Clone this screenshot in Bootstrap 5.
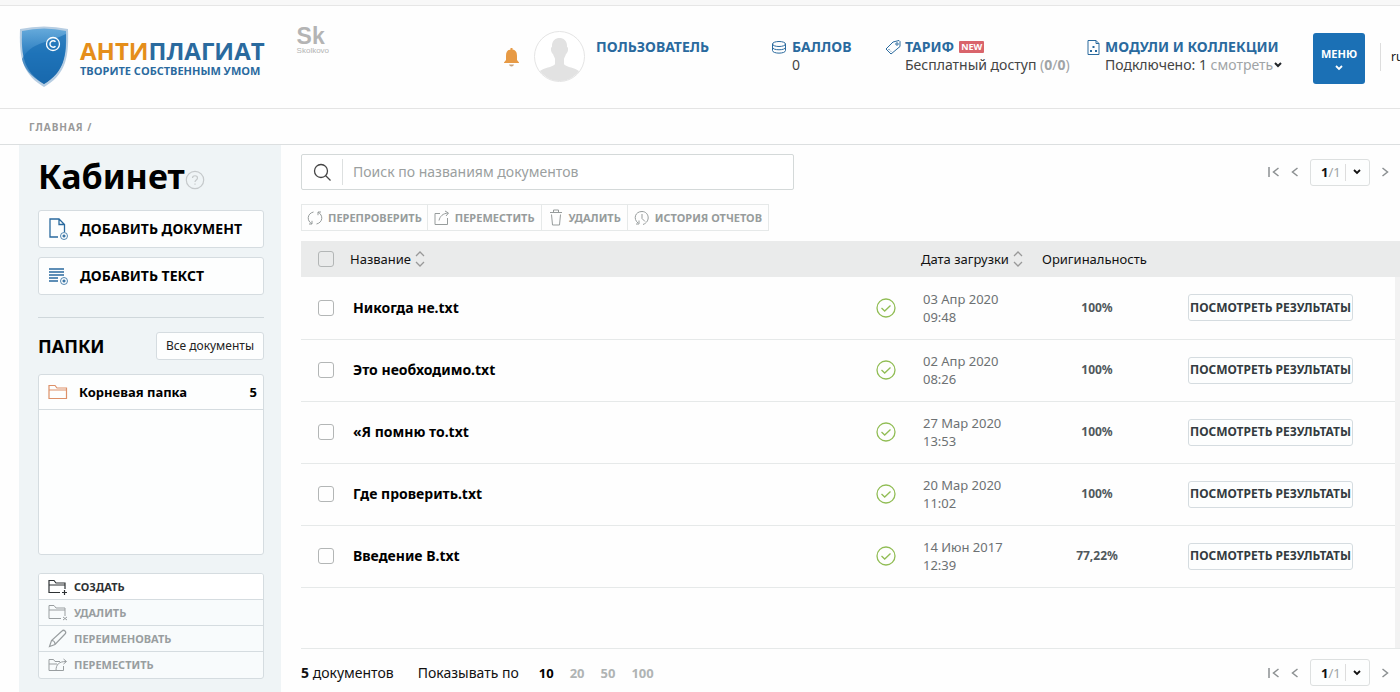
<!DOCTYPE html>
<html lang="ru">
<head>
<meta charset="utf-8">
<meta name="viewport" content="width=device-width, initial-scale=1">
<title>Антиплагиат — Кабинет</title>
<link href="https://cdn.jsdelivr.net/npm/bootstrap@5.3.0/dist/css/bootstrap.min.css" rel="stylesheet">
<style>
:root { --brand: #2a6a9e; --muted: #a0a4a6; --line: #e2e5e5; }
body { font-family: "Noto Sans", "Open Sans", sans-serif; font-size: 14px; line-height: 18px; color: #111; background: #fefefe; overflow-x: hidden; }
a { color: inherit; text-decoration: none; }
button { font-family: inherit; }
svg { flex: none; fill: none; stroke: currentColor; display: block; }
svg.solid { stroke: none; }

.top-strip { height: 6px; background: #f8f8f8; border-bottom: 1px solid #e6e6e6; }
.site-header { height: 103px; padding-left: 19px; border-bottom: 1px solid #e4e4e4; overflow: hidden; }
.site-header > * { flex: none; }
.logo { margin-top: 20px; gap: 11px; color: var(--brand); font-weight: 700; font-family: "Open Sans", "Noto Sans", sans-serif; }
.logo-name { font-size: 24px; line-height: 26px; margin-top: 12px; }
.logo-name span { color: #e58e1a; }
.logo-sub { font-size: 11px; line-height: 14px; }
.sk { color: #b4b4b4; margin: 20px 0 0 32px; font-family: "Liberation Sans", sans-serif; }
.sk b { display: block; font-size: 23px; line-height: 20px; }
.sk small { display: block; font-size: 8px; line-height: 10px; }
.bell { margin-top: 42px; }
.avatar { margin: 25px 11px 0 15px; }
.info { margin-top: 32px; gap: 4px; color: #444; }
.info > svg { color: var(--brand); margin-top: 1px; }
.info-title { color: var(--brand); font-weight: 700; gap: 5px; }
.info-user { width: 175px; }
.info-points { width: 114px; }
.info-plan { width: 201px; }
.info-modules { width: 227px; }
.new-tag { font-size: 9px; line-height: 12px; padding: 0 2px; background: #d9646b; color: #fff; border-radius: 1px; }
.pale { color: var(--muted); }
.menu-btn { width: 52px; height: 51px; margin-top: 27px; padding: 0; background: #1b70b5; color: #fff; border: 0; border-radius: 3px; font-size: 11px; font-weight: 700; line-height: 14px; }
.lang { margin: 37px 0 0 15px; padding: 5px 0 5px 10px; border-left: 1px solid #ddd; font-size: 12px; width: 20px; white-space: nowrap; }

.crumbs { height: 36px; padding-left: 29px; border-bottom: 1px solid #dcdfe0; font-size: 10px; font-weight: 700; color: #999; letter-spacing: 1px; }

.layout { min-height: calc(100vh - 145px); }
.sidebar { flex: none; width: 262px; margin-left: 19px; padding: 10px 17px 14px 19px; background: #eff4f6; }
.sidebar h1 { font-size: 34px; line-height: 42px; font-weight: 700; margin: 0; color: #000; }
.help { color: #c5c9cb; margin-top: 7px; }
.box { background: #fdfefe; border: 1px solid #d5dce0; border-radius: 3px; }
.add-list { gap: 9px; margin-top: 13px; }
.add-btn { height: 38px; padding: 0 9px; gap: 11px; font-weight: 700; color: #000; }
.add-btn svg { color: var(--brand); }
.sep { border-top: 1px solid #cfd7db; margin: 22px 0 14px; }
.folders-title { font-size: 18px; line-height: 28px; font-weight: 700; margin: 0; color: #000; }
.all-btn { height: 28px; padding: 0 9px; font-size: 12px; color: #222; }
.folders { height: 181px; margin-top: 14px; }
.folder { height: 35px; padding: 0 6px 0 9px; gap: 11px; font-size: 13px; font-weight: 700; border-bottom: 1px solid #d5dce0; color: #000; }
.folder svg { color: #dd9068; }
.acts { margin-top: 18px; background: #f8fbfc; overflow: hidden; }
.acts button { height: 26px; padding: 0 9px; gap: 6px; border: 0; border-bottom: 1px solid #d5dce0; background: none; font-size: 11px; font-weight: 700; color: #999ea0; text-align: left; }
.acts button:first-child { background: #fff; color: #2e3234; }
.acts button:last-child { border-bottom: 0; }

.content { min-width: 0; padding: 9px 0 0 20px; }
.search { width: 493px; height: 36px; border: 1px solid #d4d9d9; border-radius: 2px; background: #fff; }
.search label { width: 41px; height: 26px; border-right: 1px solid #dde0e0; color: #444; padding-left: 11px; }
.search input { border: 0; outline: 0; padding: 0 10px; background: none; min-width: 0; font-size: 14px; }
.search input::placeholder { color: #9b9f9f; opacity: 1; }
.pager { gap: 11px; color: #8c9092; padding-right: 11px; }
.pager .icon-btn { border: 0; background: none; padding: 0; color: inherit; }
.pager-box { width: 60px; height: 27px; padding: 0 0 0 10px; font-size: 13px; border-color: #dde0e0; color: #111; }
.pager-box i { border-left: 1px solid #ddd; height: 17px; margin: 0 6px 0 4px; }
.tools { margin-top: 14px; height: 27px; }
.tools button { height: 27px; padding: 0 5px; gap: 5px; background: none; border: 1px solid #e6e9e9; border-left-width: 0; font-size: 11px; font-weight: 700; color: #979c9c; white-space: nowrap; }
.tools button:first-child { border-left-width: 1px; }
.tools button:not(:first-child) { padding: 0 6px; }

.docs-area { margin-top: 10px; height: 408px; border-bottom: 1px solid #e6e9e9; background: linear-gradient(#f2f2f2, #f2f2f2) right / 5px 100% no-repeat; }
.docs { --bs-table-bg: transparent; table-layout: fixed; margin: 0; }
.docs > thead > tr > th { height: 36px; padding: 0; background: #eaebeb; font-size: 13px; font-weight: 400; border: 0; vertical-align: middle; color: #111; }
.docs > tbody > tr > td { height: 62px; padding: 0; border-bottom: 1px solid #e6e9e9; vertical-align: middle; }
.docs > tbody > tr > td:last-child { border: 0; }
.docs > :not(caption) > * > :first-child { padding-left: 17px; }
.c-check { width: 49px; } .c-state { width: 71px; } .c-date { width: 121px; } .c-orig { width: 110px; } .c-act { width: 243px; } .c-end { width: 5px; }
.docs .form-check-input { display: block; width: 16px; height: 16px; margin: 0; border: 1px solid #b3b6b6; border-radius: 3px; background-color: transparent; }
.docs .doc-name { font-weight: 700; padding-left: 3px; color: #000; }
.docs .doc-state { color: #91bd55; }
.docs .doc-date { padding-left: 2px; font-size: 13px; color: #6d7173; }
.docs .doc-orig { font-size: 12px; font-weight: 700; text-align: center; color: #50585c; }
.docs .doc-act { padding-left: 36px; }
.result-btn { width: 165px; height: 27px; padding: 0; font-size: 12px; line-height: 16px; font-weight: 700; color: #333b40; white-space: nowrap; }
.sort { color: #999; }
.foot { padding-top: 10px; }
.foot-sizes { gap: 16px; margin-left: 20px; font-size: 13px; font-weight: 700; color: #b0b4b4; }
</style>
</head>
<body>
<div class="top-strip"></div>
<header class="site-header d-flex align-items-start">
  <a href="#" class="logo d-flex">
    <svg class="solid" width="50" height="62" viewBox="0 0 50 62">
      <defs><linearGradient id="sh" x1="0" y1="0" x2="0" y2="1"><stop offset="0" stop-color="#66aadb"/><stop offset=".45" stop-color="#2d7fc1"/><stop offset="1" stop-color="#1a5f9f"/></linearGradient></defs>
      <path d="M1 3Q25-2 49 3C50 31 47 48 25 61C3 48 0 31 1 3Z" fill="#b6cde2"/>
      <path d="M3 5Q25 0 47 5C48 30 45 46 25 58C5 46 2 30 3 5Z" fill="url(#sh)"/>
      <path d="M3 33C12 16 29 17 47 8C47 30 45 46 25 58C11 50 5 42 3 33Z" fill="#176db4" opacity=".65"/>
      <circle cx="34" cy="18" r="6.500" fill="none" stroke="#fff" stroke-width="1.300"/>
      <path d="M36.500 15.800A3.200 3.200 0 1 0 36.500 20.200" fill="none" stroke="#fff" stroke-width="1.400"/>
    </svg>
    <div><div class="logo-name"><span>АНТИ</span>ПЛАГИАТ</div><div class="logo-sub">ТВОРИТЕ СОБСТВЕННЫМ УМОМ</div></div>
  </a>
  <div class="sk"><b>Sk</b><small>Skolkovo</small></div>
  <a href="#" class="bell ms-auto" aria-label="Уведомления">
    <svg class="solid" width="15" height="19" viewBox="0 0 15 19"><path fill="#e79a45" d="M6.500 0h2v1.500C12 2.200 13 4.500 13 8v4l2 2.500v.5H0v-.5L2 12V8C2 4.500 3 2.200 6.500 1.500Z"/><path fill="#c9a37d" d="M5 16.500h5q-.5 2-2.500 2T5 16.500Z"/></svg>
  </a>
  <svg class="avatar solid" width="51" height="51" viewBox="0 0 51 51"><defs><clipPath id="av"><circle cx="25.500" cy="25.500" r="24.500"/></clipPath></defs><circle cx="25.500" cy="25.500" r="25" fill="#fff" stroke="#e4e4e4"/><path clip-path="url(#av)" fill="#e2e2e2" d="M18 16c-1-12 16-12 15 0 2 0 1 6-1 7-1 3-2 4-2 5v5c2 4 15 3 18 11v8H3v-8c3-8 16-7 18-11v-5c0-1-1-2-2-5-2-1-3-7-1-7Z"/></svg>
  <div class="info info-user"><a href="#" class="info-title">ПОЛЬЗОВАТЕЛЬ</a></div>
  <div class="info info-points d-flex">
    <svg width="17" height="17" viewBox="0 0 17 17"><ellipse cx="8" cy="5" rx="6.500" ry="2.500"/><path d="M1.500 5v6.500c0 3.500 13 3.500 13 0V5M1.500 8.300c0 3.300 13 3.300 13 0"/></svg>
    <div><a href="#" class="info-title">БАЛЛОВ</a><div>0</div></div>
  </div>
  <div class="info info-plan d-flex">
    <svg width="16" height="17" viewBox="0 0 16 17"><path d="M8 3 14 1.500 15 2.500V7.500L6 15 1 10Z"/><circle cx="12" cy="5" r="1.200"/><path d="M3.500 10l2.500 2.500" stroke-dasharray="1.500 1"/></svg>
    <div><a href="#" class="info-title d-flex align-items-center">ТАРИФ <span class="new-tag">NEW</span></a><div class="text-nowrap">Бесплатный доступ <span class="pale">(<b>0</b>/<b>0</b>)</span></div></div>
  </div>
  <div class="info info-modules d-flex">
    <svg width="15" height="17" viewBox="0 0 15 17"><path d="M2 1.500h8l3 3v11H2ZM10 1.500v3h3"/><path d="M6.500 7h2v2h-2zM4 11h2v2H4zM9 11h2v2H9z" fill="currentColor" stroke="none"/></svg>
    <div><a href="#" class="info-title">МОДУЛИ И КОЛЛЕКЦИИ</a><a href="#" class="d-flex align-items-center text-nowrap">Подключено: 1&nbsp;<span class="pale">смотреть</span><svg class="text-dark" width="10" height="8" viewBox="0 0 10 8" stroke-width="2"><path d="M2 2l3 3 3-3"/></svg></a></div>
  </div>
  <button class="menu-btn d-flex flex-column align-items-center justify-content-center" type="button">МЕНЮ<svg class="mt-1" width="8" height="6" viewBox="0 0 8 6" stroke-width="1.800"><path d="M1 1l3 3 3-3"/></svg></button>
  <a href="#" class="lang">ru</a>
</header>
<nav class="crumbs d-flex align-items-center" aria-label="Навигация"><a href="#">ГЛАВНАЯ</a>&nbsp;/</nav>

<div class="layout d-flex">
  <aside class="sidebar">
    <div class="d-flex align-items-center"><h1>Кабинет</h1>
      <svg class="help" width="20" height="20" viewBox="0 0 20 20" stroke-width="1.200"><circle cx="10" cy="10" r="8.700"/><path d="M7.500 8c0-3 5-3 5 0 0 2-2.500 2-2.500 4M10 13.500v1.300"/></svg>
    </div>
    <div class="add-list d-flex flex-column">
      <button type="button" class="box add-btn d-flex align-items-center"><svg width="21" height="22" viewBox="0 0 21 22" stroke-width="1.300"><path d="M10 19H2V1h9l5.500 5.500V14M11 1v5.500h5.500"/><circle cx="16" cy="18" r="3.500" stroke-width=".8"/><path d="M14.500 18h3M16 16.500v3"/></svg>ДОБАВИТЬ ДОКУМЕНТ</button>
      <button type="button" class="box add-btn d-flex align-items-center"><svg width="21" height="18" viewBox="0 0 21 18" stroke-width="1.600"><path d="M1 2h15M1 5h15M1 8h15M1 11h9M1 14h9"/><circle cx="16" cy="14" r="3.500" stroke-width=".8"/><path stroke-width="1.300" d="M14.500 14h3M16 12.500v3"/></svg>ДОБАВИТЬ ТЕКСТ</button>
    </div>
    <div class="sep"></div>
    <div class="d-flex justify-content-between align-items-center"><h2 class="folders-title">ПАПКИ</h2><button type="button" class="box all-btn">Все документы</button></div>
    <div class="box folders"><a href="#" class="folder d-flex align-items-center"><svg width="20" height="16" viewBox="0 0 20 16" stroke-width="1.200"><path d="M1 14.500v-13h6l2 2.500h9.500v10.500ZM1 6h17.500"/></svg>Корневая папка<span class="ms-auto">5</span></a></div>
    <div class="box acts d-flex flex-column">
      <button type="button" class="d-flex align-items-center"><svg width="20" height="16" viewBox="0 0 20 16" stroke-width="1.200"><path d="M12 13.500H1v-12h5l2 2.500h9v6M1 6h16M14 13.500h5M16.500 11v5"/></svg>СОЗДАТЬ</button>
      <button type="button" class="d-flex align-items-center"><svg width="20" height="17" viewBox="0 0 20 17"><path d="M13 14.500H1v-13h5l2 2.500h9v8M1 6h16M15 13l4 3M19 13l-4 3"/></svg>УДАЛИТЬ</button>
      <button type="button" class="d-flex align-items-center"><svg width="20" height="19" viewBox="0 0 20 19" stroke-width="1.200"><path d="M1.500 17.500l2-6L14 2c2-2 5 1 3 3L7 15.500ZM3.500 11.500c2 0 3.500 1.500 3.500 4"/></svg>ПЕРЕИМЕНОВАТЬ</button>
      <button type="button" class="d-flex align-items-center"><svg width="20" height="15" viewBox="0 0 20 15"><path d="M8 12.500H1v-11h4.500L7 3.500h5M1 6h8M15.500 8v4.500H8c0-6 3-9 10-9M15.500 1l3 2.500-3 2.500"/></svg>ПЕРЕМЕСТИТЬ</button>
    </div>
  </aside>

  <main class="content flex-grow-1">
    <div class="d-flex align-items-center justify-content-between">
      <form class="search d-flex align-items-center"><label for="q"><svg width="20" height="26" viewBox="0 0 20 26" stroke-width="1.300"><circle cx="8" cy="12" r="6.500"/><path d="M12.500 16.500l5 5"/></svg></label><input id="q" class="flex-grow-1" type="text" placeholder="Поиск по названиям документов"></form>
      <div class="pager d-flex align-items-center">
        <button class="icon-btn" type="button" aria-label="Первая"><svg width="12" height="10" viewBox="0 0 12 10" stroke-width="1.500"><path d="M1 0v10M10.500 1l-5 4 5 4"/></svg></button>
        <button class="icon-btn" type="button" aria-label="Назад"><svg width="8" height="10" viewBox="0 0 8 10" stroke-width="1.500"><path d="M6.500 1l-5 4 5 4"/></svg></button>
        <button type="button" class="box pager-box d-flex align-items-center"><b>1</b><span class="pale">/1</span><i></i><svg width="10" height="8" viewBox="0 0 10 8" stroke-width="1.800"><path d="M2 2l3 3 3-3"/></svg></button>
        <button class="icon-btn" type="button" aria-label="Вперёд"><svg width="8" height="10" viewBox="0 0 8 10" stroke-width="1.500"><path d="M1.500 1l5 4-5 4"/></svg></button>
      </div>
    </div>
    <div class="tools d-flex">
      <button type="button" class="d-flex align-items-center"><svg width="16" height="16" viewBox="0 0 16 16"><path d="M6.500 2C0 3.500-.5 11 5 13.800M5 10.800v3.200H2M9.500 14C16 12.500 16.500 5 11 2.200M11 5.200V2h3"/></svg>ПЕРЕПРОВЕРИТЬ</button>
      <button type="button" class="d-flex align-items-center"><svg width="16" height="16" viewBox="0 0 16 16"><path d="M6 3.500H1v11h12.500V8M5 10.500C6 6 9 3.500 14 3M11 1l3.500 2L12 6"/></svg>ПЕРЕМЕСТИТЬ</button>
      <button type="button" class="d-flex align-items-center"><svg width="16" height="17" viewBox="0 0 16 17"><path d="M2 3.500h12M5.500 3.500V1h5v2.500M3.500 5.500 4.500 16h7l1-10.500"/></svg>УДАЛИТЬ</button>
      <button type="button" class="d-flex align-items-center"><svg width="16" height="16" viewBox="0 0 16 16"><path d="M4 13C-1 9 1 1.500 8 1.500c7 0 9 10 1 13M8 4v4.500l3 3M5 10.500V14H2"/></svg>ИСТОРИЯ ОТЧЕТОВ</button>
    </div>
    <div class="docs-area">
      <table class="table docs">
        <colgroup><col class="c-check"><col><col class="c-state"><col class="c-date"><col class="c-orig"><col class="c-act"><col class="c-end"></colgroup>
        <thead><tr>
          <th><input class="form-check-input" type="checkbox" aria-label="Выбрать все"></th>
          <th><span class="d-flex align-items-center gap-1">Название <svg class="sort" width="10" height="16" viewBox="0 0 10 16" stroke-width="1.300"><path d="M1 5l4-4 4 4M1 11l4 4 4-4"/></svg></span></th>
          <th></th>
          <th><span class="d-flex align-items-center gap-1 text-nowrap">Дата загрузки <svg class="sort" width="10" height="16" viewBox="0 0 10 16" stroke-width="1.300"><path d="M1 5l4-4 4 4M1 11l4 4 4-4"/></svg></span></th>
          <th>Оригинальность</th><th></th><th></th>
        </tr></thead>
        <tbody id="rows"></tbody>
      </table>
    </div>
    <div class="foot d-flex align-items-center">
      <span><b>5</b> документов</span><span class="ms-4">Показывать по</span>
      <span class="foot-sizes d-flex"><a href="#" class="text-black">10</a><a href="#">20</a><a href="#">50</a><a href="#">100</a></span>
      <div class="pager d-flex align-items-center ms-auto">
        <button class="icon-btn" type="button" aria-label="Первая"><svg width="12" height="10" viewBox="0 0 12 10" stroke-width="1.500"><path d="M1 0v10M10.500 1l-5 4 5 4"/></svg></button>
        <button class="icon-btn" type="button" aria-label="Назад"><svg width="8" height="10" viewBox="0 0 8 10" stroke-width="1.500"><path d="M6.500 1l-5 4 5 4"/></svg></button>
        <button type="button" class="box pager-box d-flex align-items-center"><b>1</b><span class="pale">/1</span><i></i><svg width="10" height="8" viewBox="0 0 10 8" stroke-width="1.800"><path d="M2 2l3 3 3-3"/></svg></button>
        <button class="icon-btn" type="button" aria-label="Вперёд"><svg width="8" height="10" viewBox="0 0 8 10" stroke-width="1.500"><path d="M1.500 1l5 4-5 4"/></svg></button>
      </div>
    </div>
  </main>
</div>
<script>
const docs = [
  ["Никогда не.txt", "03 Апр 2020", "09:48", "100%"],
  ["Это необходимо.txt", "02 Апр 2020", "08:26", "100%"],
  ["«Я помню то.txt", "27 Мар 2020", "13:53", "100%"],
  ["Где проверить.txt", "20 Мар 2020", "11:02", "100%"],
  ["Введение В.txt", "14 Июн 2017", "12:39", "77,22%"]
];
document.getElementById("rows").innerHTML = docs.map(([name, day, time, orig]) => `
  <tr>
    <td><input class="form-check-input" type="checkbox" aria-label="${name}"></td>
    <td class="doc-name">${name}</td>
    <td class="doc-state"><svg class="mx-auto" width="20" height="20" viewBox="0 0 20 20" stroke-width="1.300"><circle cx="10" cy="10" r="9"/><path d="M5.500 10l3.200 3L14.500 7.500"/></svg></td>
    <td class="doc-date">${day}<br>${time}</td>
    <td class="doc-orig">${orig}</td>
    <td class="doc-act"><button type="button" class="box result-btn">ПОСМОТРЕТЬ РЕЗУЛЬТАТЫ</button></td>
    <td></td>
  </tr>`).join("");
</script>
<script src="https://cdn.jsdelivr.net/npm/bootstrap@5.3.0/dist/js/bootstrap.bundle.min.js"></script>
</body>
</html>
